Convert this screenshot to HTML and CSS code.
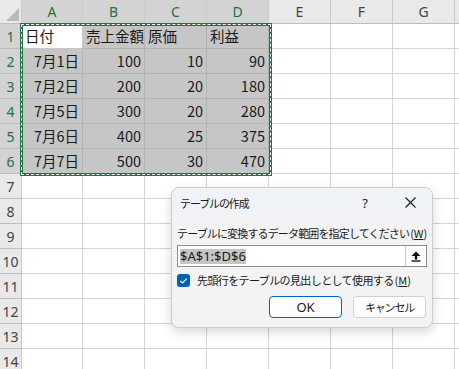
FILE: index.html
```html
<!DOCTYPE html>
<html lang="ja">
<head>
    <meta charset="UTF-8">
    <title>テーブルの作成</title>
    <link rel="stylesheet" href="styles.css">
</head>
<body>
<div class="sheet">
    <div class="grid">
        <div class="corner"><svg width="22" height="24"><polygon points="6,21 19,21 19,8" fill="#b9b9b9"/></svg></div>
        <div class="colhead sel">A</div>
        <div class="colhead sel">B</div>
        <div class="colhead sel">C</div>
        <div class="colhead sel">D</div>
        <div class="colhead">E</div>
        <div class="colhead">F</div>
        <div class="colhead">G</div>
        <div class="colhead"></div>

        <div class="rowhead sel">1</div>
        <div class="cell active">日付</div>
        <div class="cell in">売上金額</div>
        <div class="cell in">原価</div>
        <div class="cell in">利益</div>
        <div class="cell"></div><div class="cell"></div><div class="cell"></div><div class="cell"></div>

        <div class="rowhead sel">2</div>
        <div class="cell in num">7月1日</div>
        <div class="cell in num">100</div>
        <div class="cell in num">10</div>
        <div class="cell in num">90</div>
        <div class="cell"></div><div class="cell"></div><div class="cell"></div><div class="cell"></div>

        <div class="rowhead sel">3</div>
        <div class="cell in num">7月2日</div>
        <div class="cell in num">200</div>
        <div class="cell in num">20</div>
        <div class="cell in num">180</div>
        <div class="cell"></div><div class="cell"></div><div class="cell"></div><div class="cell"></div>

        <div class="rowhead sel">4</div>
        <div class="cell in num">7月5日</div>
        <div class="cell in num">300</div>
        <div class="cell in num">20</div>
        <div class="cell in num">280</div>
        <div class="cell"></div><div class="cell"></div><div class="cell"></div><div class="cell"></div>

        <div class="rowhead sel">5</div>
        <div class="cell in num">7月6日</div>
        <div class="cell in num">400</div>
        <div class="cell in num">25</div>
        <div class="cell in num">375</div>
        <div class="cell"></div><div class="cell"></div><div class="cell"></div><div class="cell"></div>

        <div class="rowhead sel">6</div>
        <div class="cell in num">7月7日</div>
        <div class="cell in num">500</div>
        <div class="cell in num">30</div>
        <div class="cell in num">470</div>
        <div class="cell"></div><div class="cell"></div><div class="cell"></div><div class="cell"></div>

        <div class="rowhead">7</div>
        <div class="cell"></div><div class="cell"></div><div class="cell"></div><div class="cell"></div>
        <div class="cell"></div><div class="cell"></div><div class="cell"></div><div class="cell"></div>
        <div class="rowhead">8</div>
        <div class="cell"></div><div class="cell"></div><div class="cell"></div><div class="cell"></div>
        <div class="cell"></div><div class="cell"></div><div class="cell"></div><div class="cell"></div>
        <div class="rowhead">9</div>
        <div class="cell"></div><div class="cell"></div><div class="cell"></div><div class="cell"></div>
        <div class="cell"></div><div class="cell"></div><div class="cell"></div><div class="cell"></div>
        <div class="rowhead">10</div>
        <div class="cell"></div><div class="cell"></div><div class="cell"></div><div class="cell"></div>
        <div class="cell"></div><div class="cell"></div><div class="cell"></div><div class="cell"></div>
        <div class="rowhead">11</div>
        <div class="cell"></div><div class="cell"></div><div class="cell"></div><div class="cell"></div>
        <div class="cell"></div><div class="cell"></div><div class="cell"></div><div class="cell"></div>
        <div class="rowhead">12</div>
        <div class="cell"></div><div class="cell"></div><div class="cell"></div><div class="cell"></div>
        <div class="cell"></div><div class="cell"></div><div class="cell"></div><div class="cell"></div>
        <div class="rowhead">13</div>
        <div class="cell"></div><div class="cell"></div><div class="cell"></div><div class="cell"></div>
        <div class="cell"></div><div class="cell"></div><div class="cell"></div><div class="cell"></div>
        <div class="rowhead">14</div>
        <div class="cell"></div><div class="cell"></div><div class="cell"></div><div class="cell"></div>
        <div class="cell"></div><div class="cell"></div><div class="cell"></div><div class="cell"></div>
    </div>

    <!-- copy marquee around A1:D6 -->
    <div class="marquee"></div>

    <div class="dialog">
        <div class="dialog-title">
            <span class="title-text">テーブルの作成</span>
            <span class="help">?</span>
            <span class="close">
                <svg width="11" height="11"><path d="M0.5 0.5L10.5 10.5M10.5 0.5L0.5 10.5" stroke="#1a1a1a" stroke-width="1.1"/></svg>
            </span>
        </div>
        <div class="dialog-body">
            <div class="prompt">テーブルに変換するデータ範囲を指定してください<span class="key">(<u>W</u>)</span></div>
            <div class="range-input">
                <span class="range-text">$A$1:$D$6</span>
                <span class="collapse-btn">
                    <svg width="10" height="11"><polygon points="0.5,5 5,0.5 9.5,5" fill="#111"/><rect x="3.8" y="4.5" width="2.4" height="4" fill="#111"/><rect x="0.5" y="9.3" width="9" height="1.4" fill="#111"/></svg>
                </span>
            </div>
            <label class="check-row">
                <span class="checkbox">
                    <svg width="13" height="13"><path d="M3.3 6.8L5.5 9L9.8 4.6" fill="none" stroke="#fff" stroke-width="1.2"/></svg>
                </span>
                <span>先頭行をテーブルの見出しとして使用する<span class="key">(<u>M</u>)</span></span>
            </label>
            <div class="buttons">
                <button class="btn primary">OK</button>
                <button class="btn">キャンセル</button>
            </div>
        </div>
    </div>
</div>
</body>
</html>
```

FILE: styles.css
```css
* {
    box-sizing: border-box;
}

body {
    margin: 0;
    background: #fff;
    font-family: "Noto Sans CJK JP", sans-serif;
    overflow: hidden;
}

.sheet {
    position: relative;
    width: 459px;
    height: 369px;
    overflow: hidden;
}

.grid {
    display: grid;
    grid-template-columns: 22px 61px repeat(6, 62px) 1fr;
    grid-template-rows: 24px;
    grid-auto-rows: 25px;
}

.cell {
    border-right: 1px solid #d4d4d4;
    border-bottom: 1px solid #d4d4d4;
    font-size: 14.5px;
    line-height: 24px;
    padding: 0 3px;
    white-space: nowrap;
    color: #1a1a1a;
}

.cell.in {
    background: #c6c6c6;
    border-color: #b3b3b3;
}

.cell.active {
    background: #fff;
    border-color: #c6c6c6;
}

.num {
    text-align: right;
}

.corner, .colhead, .rowhead {
    display: flex;
    align-items: center;
    justify-content: center;
    background: #e9e9e9;
    border-right: 1px solid #cacaca;
    border-bottom: 1px solid #bdbdbd;
    font-family: "Noto Sans", sans-serif;
    font-size: 14px;
    color: #444;
}

.corner {
    display: block;
}

.colhead.sel, .rowhead.sel {
    background: #d3d3d3;
    color: #1e7145;
}

.marquee {
    position: absolute;
    left: 20px;
    top: 23px;
    width: 252px;
    height: 153px;
    border: 3px solid #217346;
}

.marquee::after {
    content: "";
    position: absolute;
    top: -2px;
    left: -2px;
    right: -2px;
    bottom: -2px;
    border: 1px dashed #fff;
}

/* dialog */

.dialog {
    position: absolute;
    left: 171px;
    top: 187px;
    width: 262px;
    height: 141px;
    background: #f3f3f3;
    border: 1px solid #cdcdcd;
    border-radius: 8px;
    box-shadow: 0 4px 12px rgba(0, 0, 0, 0.16);
    font-size: 11px;
    color: #1a1a1a;
    overflow: hidden;
}

.dialog-title {
    display: flex;
    align-items: center;
    height: 29px;
    padding: 0 12px 0 8px;
    background: #eff2f6;
}

.title-text {
    flex: 1;
    letter-spacing: -1.1px;
}

.help, .close {
    display: flex;
    align-items: center;
    justify-content: center;
    width: 20px;
    height: 20px;
    font-family: "Noto Sans", sans-serif;
    font-size: 13px;
}

.help {
    margin-right: 25px;
}

.dialog-body {
    padding: 8px 5px 0 5px;
}

.prompt {
    line-height: 16px;
    white-space: nowrap;
    letter-spacing: -0.85px;
}

.check-row {
    display: flex;
    align-items: center;
    gap: 7px;
    height: 14px;
    margin-top: 6px;
    white-space: nowrap;
    letter-spacing: -0.6px;
}

.key {
    letter-spacing: 0;
    margin-left: 1px;
}

.range-input {
    display: flex;
    align-items: center;
    height: 22px;
    margin-top: 4px;
    background: #fff;
    border: 1px solid #8d8d8d;
    padding-left: 2px;
}

.range-text {
    flex: 1;
    font-family: "Noto Sans", sans-serif;
    font-size: 13px;
    line-height: 15px;
    background: linear-gradient(#c6c6c6, #c6c6c6) no-repeat left / 66px 15px;
}

.collapse-btn {
    display: flex;
    align-items: center;
    justify-content: center;
    width: 21px;
    height: 20px;
    border-left: 1px solid #d0d0d0;
    background: #fdfdfd;
}

.checkbox {
    width: 13px;
    height: 13px;
    border-radius: 3px;
    background: #005fb8;
    display: flex;
}

.buttons {
    display: flex;
    justify-content: flex-end;
    gap: 11px;
    margin-top: 9px;
    margin-right: 1px;
}

.btn {
    width: 73px;
    height: 22px;
    padding: 0;
    background: #fdfdfd;
    border: 1px solid #d0d0d0;
    border-radius: 4px;
    font-family: "Noto Sans CJK JP", sans-serif;
    font-size: 11px;
    letter-spacing: -1.2px;
    color: #1a1a1a;
}

.btn.primary {
    border-color: #0067c0;
    font-family: "Noto Sans", sans-serif;
    font-size: 13px;
    letter-spacing: 0;
}
```
